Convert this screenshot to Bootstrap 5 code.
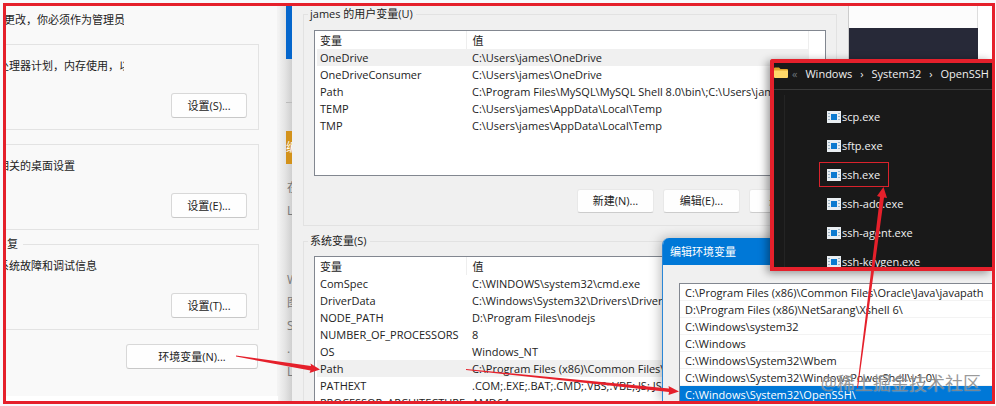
<!DOCTYPE html>
<html lang="zh-CN">
<head>
<meta charset="utf-8">
<meta name="viewport" content="width=device-width, initial-scale=1">
<title>环境变量</title>
<link href="https://cdn.jsdelivr.net/npm/bootstrap@5.3.0/dist/css/bootstrap.min.css" rel="stylesheet">
<style>
  body { font-family: "Open Sans", "Noto Sans CJK SC", sans-serif; font-size: 11px; line-height: 17px; color: #222; background: #f8f9fc; padding: 3px 1px 2px 3px; }
  .desk { border: 3px solid #e5202b; background: #fff; height: calc(100vh - 5px); }
  .win { position: absolute; }
  .clip { white-space: nowrap; overflow: hidden; }

  .backdrop { left: 842px; top: 22px; width: 130px; height: 60px; background: #272938; }
  .page-edge { left: 842px; top: 0; width: 130px; height: 22px; border: 1px solid #ddd; border-width: 0 1px; background: #fcfcfc; }

  .behind { left: 272px; top: 0; width: 14px; bottom: 0; background: linear-gradient(90deg, #f3f3f3, #e4e4e4 50%, #cfcfcf); color: #777; padding-left: 8px; font-size: 12px; }
  .behind .bar-blue { height: 53px; background: #0566cc; }
  .behind .bar-line { height: 44px; border-bottom: 1px solid #bbb; }
  .behind .bar-gold { height: 33px; margin: 28px 0 12px; background: #d3921b; color: #fff; line-height: 33px; }
  .behind .bits { line-height: 23px; padding-left: 1px; }

  .props { left: 0; top: 0; width: 272px; height: 390px; background: #f9f9f9; border-right: 1px solid #f3f3f3; }
  .props .note { width: 120px; height: 38px; padding-top: 5px; margin-left: -2px; }
  .props fieldset { width: 253px; height: 86px; margin-bottom: 14px; border: 1px solid #e3e3e3; border-left: 0; padding: 12px 11px 11px 0; }
  .props legend { position: absolute; top: 230px; left: 1px; width: 16px; font-size: 11px; line-height: 16px; background: #f9f9f9; }
  .props .desc { width: 126px; margin-left: -8px; }
  .props .below { padding-right: 19px; }
  .wbtn { font: inherit; color: #222; background: #fefefe; border: 1px solid #d8d8d8; border-bottom-color: #c8c8c8; border-radius: 3px; padding: 0; height: 25px; width: 76px; line-height: 22px; white-space: nowrap; }
  .wide { width: 132px; }

  .env { left: 286px; top: 0; width: 557px; height: 420px; background: #f0f0f0; border-right: 1px solid #ccc; padding: 0 11px; }
  .env fieldset { border: 1px solid #e2e2e2; padding: 0 10px; }
  .env legend { font-size: 11px; line-height: 16px; margin: 0 0 0 -6px; padding: 0 3px 0 2px; float: none; width: max-content; }
  .env .user { height: 220px; margin-bottom: 7px; }
  .env .sys { height: 240px; }
  .listbox { border: 1px solid #828790; background: #fff; overflow: hidden; padding: 0 16px 0 2px; }
  .user .listbox { height: 146px; margin: 8px 0 13px; }
  .sys .listbox { height: 200px; margin-top: 7px; }
  .btn-line { gap: 9px; }
  .vars { width: 100%; table-layout: fixed; }
  .vars th { font-weight: 400; height: 18px; padding: 1px 3px 0; border-right: 1px solid #eee; }
  .vars th:first-child { width: 149px; }
  .vars td { height: 17px; padding: 0 3px; white-space: nowrap; overflow: hidden; }
  .vars td + td, .vars th + th { padding-left: 6px; }
  .vars .on { background: #f0f0f0; }
  .user .wbtn { width: 77px; height: 24px; border-color: #e8e8e8; border-bottom-color: #ccc; }

  .edit { left: 656px; top: 232px; right: 0; bottom: 0; background: #f0f0f0; border-left: 1px solid #2a86d6; border-radius: 7px 0 0 0; overflow: hidden; box-shadow: -2px 0 12px #0004; }
  .edit .bar { background: #0078d7; color: #fff; height: 27px; line-height: 27px; padding-left: 7px; margin-bottom: 18px; }
  .edit .rows { margin-left: 16px; border: 1px solid #828790; border-right: 0; background: #fff; height: 130px; }
  .edit .rows li { padding-left: 5px; height: 17px; line-height: 17px; border-bottom: 1px solid #f3f3f3; white-space: nowrap; }
  .edit .rows .on { background: #0078d7; color: #fff; border-color: #0078d7; }

  .files { left: 764px; top: 53px; right: 0; height: 212px; background: #191919; color: #f0f0f0; border: 4px solid #e5202b; border-right: 0; border-radius: 3px 0 0 0; overflow: hidden; box-shadow: -3px 2px 8px #0006; }
  .files .path { height: 27px; border-bottom: 1px solid #3a3a3a; line-height: 21px; white-space: nowrap; }
  .files .path svg { margin: 4px 4px 0 0; }
  .files .crumb { color: #f0f0f0; text-decoration: none; }
  .files .tree { border-left: 1px solid #242424; margin: 5px 0 0 10px; padding: 9px 0 0 34px; }
  .files .tree li { height: 25px; margin-bottom: 4px; padding: 0 8px 0 7px; border: 1px solid transparent; width: max-content; }
  .files .tree svg { margin-right: 1px; }
  .files .tree .picked { border-color: #d9222c; }

  .arrows { left: 0; top: 0; pointer-events: none; }
  .credit { right: 11px; bottom: 6px; font-size: 18px; line-height: 24px; color: #5559; text-shadow: 0 0 1px #fffc; pointer-events: none; }
</style>
</head>
<body>
<main class="desk position-relative overflow-hidden">
  <div class="win page-edge"></div>
  <div class="win backdrop"></div>

  <div class="win behind clip" aria-hidden="true">
    <div class="bar-blue"></div>
    <div class="bar-line"></div>
    <div class="bar-gold clip">编</div>
    <div class="bits">在<br>L<br><br><br>W<br>图<br>S<br>.<br>L</div>
  </div>

  <section class="win props">
    <div class="note clip">更改，你必须作为管理员进行</div>
    <fieldset class="d-flex flex-column justify-content-between">
      <div class="desc clip" id="d1">处理器计划，内存使用，以及</div>
      <button class="wbtn align-self-end" aria-describedby="d1">设置(S)...</button>
    </fieldset>
    <fieldset class="d-flex flex-column justify-content-between">
      <div class="desc clip" id="d2">相关的桌面设置</div>
      <button class="wbtn align-self-end" aria-describedby="d2">设置(E)...</button>
    </fieldset>
    <fieldset class="d-flex flex-column justify-content-between">
      <legend>复</legend>
      <div class="desc clip" id="d3">系统故障和调试信息</div>
      <button class="wbtn align-self-end" aria-describedby="d3">设置(T)...</button>
    </fieldset>
    <div class="below d-flex justify-content-end"><button class="wbtn wide">环境变量(N)...</button></div>
  </section>

  <section class="win env">
    <fieldset class="user">
      <legend>james 的用户变量(U)</legend>
      <div class="listbox">
        <table class="vars">
          <thead><tr><th>变量</th><th>值</th></tr></thead>
          <tbody>
            <tr class="on"><td>OneDrive</td><td>C:\Users\james\OneDrive</td></tr>
            <tr><td>OneDriveConsumer</td><td>C:\Users\james\OneDrive</td></tr>
            <tr><td>Path</td><td>C:\Program Files\MySQL\MySQL Shell 8.0\bin\;C:\Users\james</td></tr>
            <tr><td>TEMP</td><td>C:\Users\james\AppData\Local\Temp</td></tr>
            <tr><td>TMP</td><td>C:\Users\james\AppData\Local\Temp</td></tr>
          </tbody>
        </table>
      </div>
      <div class="btn-line d-flex justify-content-end">
        <button class="wbtn">新建(N)...</button>
        <button class="wbtn">编辑(E)...</button>
        <button class="wbtn">删除(D)</button>
      </div>
    </fieldset>
    <fieldset class="sys">
      <legend>系统变量(S)</legend>
      <div class="listbox">
        <table class="vars">
          <thead><tr><th>变量</th><th>值</th></tr></thead>
          <tbody>
            <tr><td>ComSpec</td><td>C:\WINDOWS\system32\cmd.exe</td></tr>
            <tr><td>DriverData</td><td>C:\Windows\System32\Drivers\DriverData</td></tr>
            <tr><td>NODE_PATH</td><td>D:\Program Files\nodejs</td></tr>
            <tr><td>NUMBER_OF_PROCESSORS</td><td>8</td></tr>
            <tr><td>OS</td><td>Windows_NT</td></tr>
            <tr class="on"><td>Path</td><td>C:\Program Files (x86)\Common Files\Oracle</td></tr>
            <tr><td>PATHEXT</td><td>.COM;.EXE;.BAT;.CMD;.VBS;.VBE;.JS;.JSE</td></tr>
            <tr><td>PROCESSOR_ARCHITECTURE</td><td>AMD64</td></tr>
          </tbody>
        </table>
      </div>
    </fieldset>
  </section>

  <section class="win edit">
    <div class="bar">编辑环境变量</div>
    <ul class="rows list-unstyled mb-0">
      <li>C:\Program Files (x86)\Common Files\Oracle\Java\javapath</li>
      <li>D:\Program Files (x86)\NetSarang\Xshell 6\</li>
      <li>C:\Windows\system32</li>
      <li>C:\Windows</li>
      <li>C:\Windows\System32\Wbem</li>
      <li>C:\Windows\System32\WindowsPowerShell\v1.0\</li>
      <li class="on">C:\Windows\System32\OpenSSH\</li>
    </ul>
  </section>

  <section class="win files">
    <svg class="d-none"><symbol id="exe" viewBox="0 0 14 12"><path fill="#e9eef2" d="M0 0h14v12H0z"/><path fill="#9fb4c4" d="M1 2h2v1H1zm0 3h2v1H1zm0 3h2v1H1zM11 2h2v1h-2zm0 3h2v1h-2zm0 3h2v1h-2z"/><path fill="#0c7ad0" d="M4 3h6v6H4z"/></symbol></svg>
    <nav class="path d-flex">
      <svg width="14" height="12" viewBox="0 0 14 12"><path fill="#e0a62c" d="M0 1.500Q0 .5 1 .5h4L6.500 2H13q1 0 1 1v7H0z"/><path fill="#ffd869" d="M0 3.500h14V10q0 1-1 1H1q-1 0-1-1z"/></svg>
      <span class="me-2 text-secondary">«</span><a class="crumb" href="#">Windows</a><span class="mx-2">›</span><a class="crumb" href="#">System32</a><span class="mx-2">›</span><a class="crumb" href="#">OpenSSH</a>
    </nav>
    <ul class="tree list-unstyled mb-0">
      <li class="d-flex align-items-center"><svg width="14" height="12"><use href="#exe"/></svg>scp.exe</li>
      <li class="d-flex align-items-center"><svg width="14" height="12"><use href="#exe"/></svg>sftp.exe</li>
      <li class="d-flex align-items-center picked"><svg width="14" height="12"><use href="#exe"/></svg>ssh.exe</li>
      <li class="d-flex align-items-center"><svg width="14" height="12"><use href="#exe"/></svg>ssh-add.exe</li>
      <li class="d-flex align-items-center"><svg width="14" height="12"><use href="#exe"/></svg>ssh-agent.exe</li>
      <li class="d-flex align-items-center"><svg width="14" height="12"><use href="#exe"/></svg>ssh-keygen.exe</li>
    </ul>
  </section>

  <div class="win credit">@稀土掘金技术社区</div>

  <svg class="win arrows" width="986" height="395" viewBox="6 6 986 395" fill="#e5202b" aria-hidden="true">
    <path d="M236 355.500L311 366L310.500 363.500L320 369.500L309.500 373L310.500 370.500L236 356.500z"/>
    <path d="M466 369L669 388.500L668.500 386L679 391.500L668.500 395L669 392L466 370z"/>
    <path d="M857 388L880 197L877 196L883.500 187L887 198L884 197.500L858 388z"/>
  </svg>
</main>
<script src="https://cdn.jsdelivr.net/npm/bootstrap@5.3.0/dist/js/bootstrap.bundle.min.js"></script>
</body>
</html>
